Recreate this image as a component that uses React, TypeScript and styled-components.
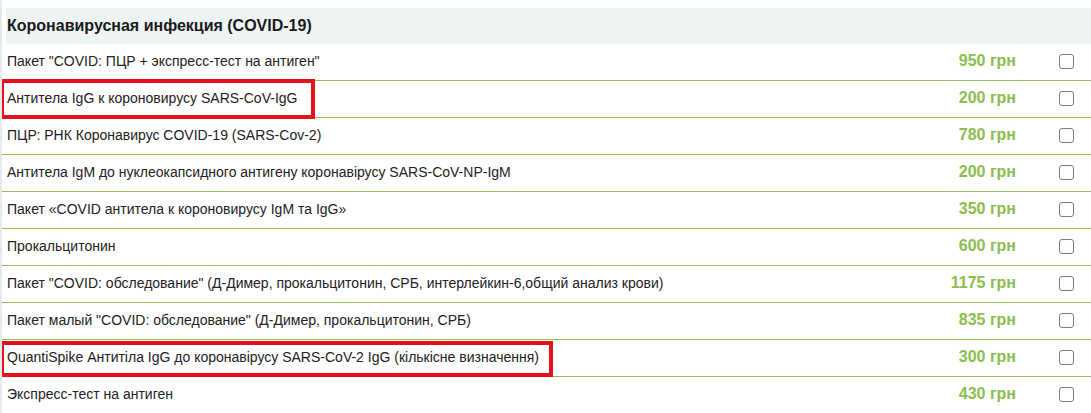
import React from 'react';
import styled, { createGlobalStyle } from 'styled-components';

type Mark = { top: number; width: number; height: number };

type Item = {
    name: string;
    price: number;
    mark?: Mark;
};

const items: Item[] = [
    { name: 'Пакет "COVID: ПЦР + экспресс-тест на антиген"', price: 950 },
    { name: 'Антитела IgG к короновирусу SARS-CoV-IgG', price: 200, mark: { top: -2, width: 315, height: 40 } },
    { name: 'ПЦР: РНК Коронавирус COVID-19 (SARS-Cov-2)', price: 780 },
    { name: 'Антитела IgM до нуклеокапсидного антигену коронавірусу SARS-CoV-NP-IgM', price: 200 },
    { name: 'Пакет «COVID антитела к короновирусу IgM та IgG»', price: 350 },
    { name: 'Прокальцитонин', price: 600 },
    { name: 'Пакет "COVID: обследование" (Д-Димер, прокальцитонин, СРБ, интерлейкин-6,общий анализ крови)', price: 1175 },
    { name: 'Пакет малый "COVID: обследование" (Д-Димер, прокальцитонин, СРБ)', price: 835 },
    { name: 'QuantiSpike Антитіла IgG до коронавірусу SARS-CoV-2 IgG (кількісне визначення)', price: 300, mark: { top: 1, width: 553, height: 36 } },
    { name: 'Экспресс-тест на антиген', price: 430 },
];

// Price list block for one group of tests
export default function App() {
    return (
        <>
            <GlobalStyle />
            <Page>
                <GroupTitle>Коронавирусная инфекция (COVID-19)</GroupTitle>
                {items.map(item => (
                    <Row key={item.name}>
                        <Name>{item.name}</Name>
                        <Price>{item.price} грн</Price>
                        <CheckCell>
                            <Check type="checkbox" aria-label={item.name} />
                        </CheckCell>
                        {!!item.mark && (
                            <Highlight $top={item.mark.top} $width={item.mark.width} $height={item.mark.height} />
                        )}
                    </Row>
                ))}
            </Page>
        </>
    );
}

const GlobalStyle = createGlobalStyle`
    html, body {
        margin: 0;
        background: #fff;
        font-family: "Liberation Sans", Arial, sans-serif;
    }
`;

const Page = styled.div`
    height: 413px;
    overflow: hidden;
    padding-top: 8px;
    box-sizing: border-box;
    border-left: 2px solid #e3eaee;
`;

const GroupTitle = styled.div`
    display: flex;
    align-items: center;
    height: 36px;
    margin-left: 4px;
    padding-left: 1px;
    background: #eef3f4;
    font-size: 16px;
    font-weight: bold;
    color: #1b1b1b;
`;

const Row = styled.div`
    position: relative;
    display: grid;
    grid-template-columns: 1fr auto 75px;
    align-items: center;
    box-sizing: border-box;
    height: 37px;
    padding: 0 0 2px 5px;
    border-bottom: 1px solid #8fbf55;
`;

const Name = styled.div`
    font-size: 14px;
    color: #222;
    white-space: nowrap;
`;

const Price = styled.div`
    font-size: 16px;
    font-weight: bold;
    color: #8cbd4f;
    text-align: right;
`;

const CheckCell = styled.div`
    display: flex;
    align-items: center;
    padding-left: 43px;
`;

const Check = styled.input`
    appearance: none;
    width: 15px;
    height: 15px;
    margin: 0;
    border: 1px solid #7a7a7a;
    border-radius: 3px;
    background: #fff;
    box-sizing: border-box;
`;

// red annotation frame drawn over a row
const Highlight = styled.div<{ $top: number; $width: number; $height: number }>`
    position: absolute;
    left: -2px;
    top: ${p => p.$top}px;
    width: ${p => p.$width}px;
    height: ${p => p.$height}px;
    border: 4px solid #e5121b;
    box-sizing: border-box;
    pointer-events: none;
`;
